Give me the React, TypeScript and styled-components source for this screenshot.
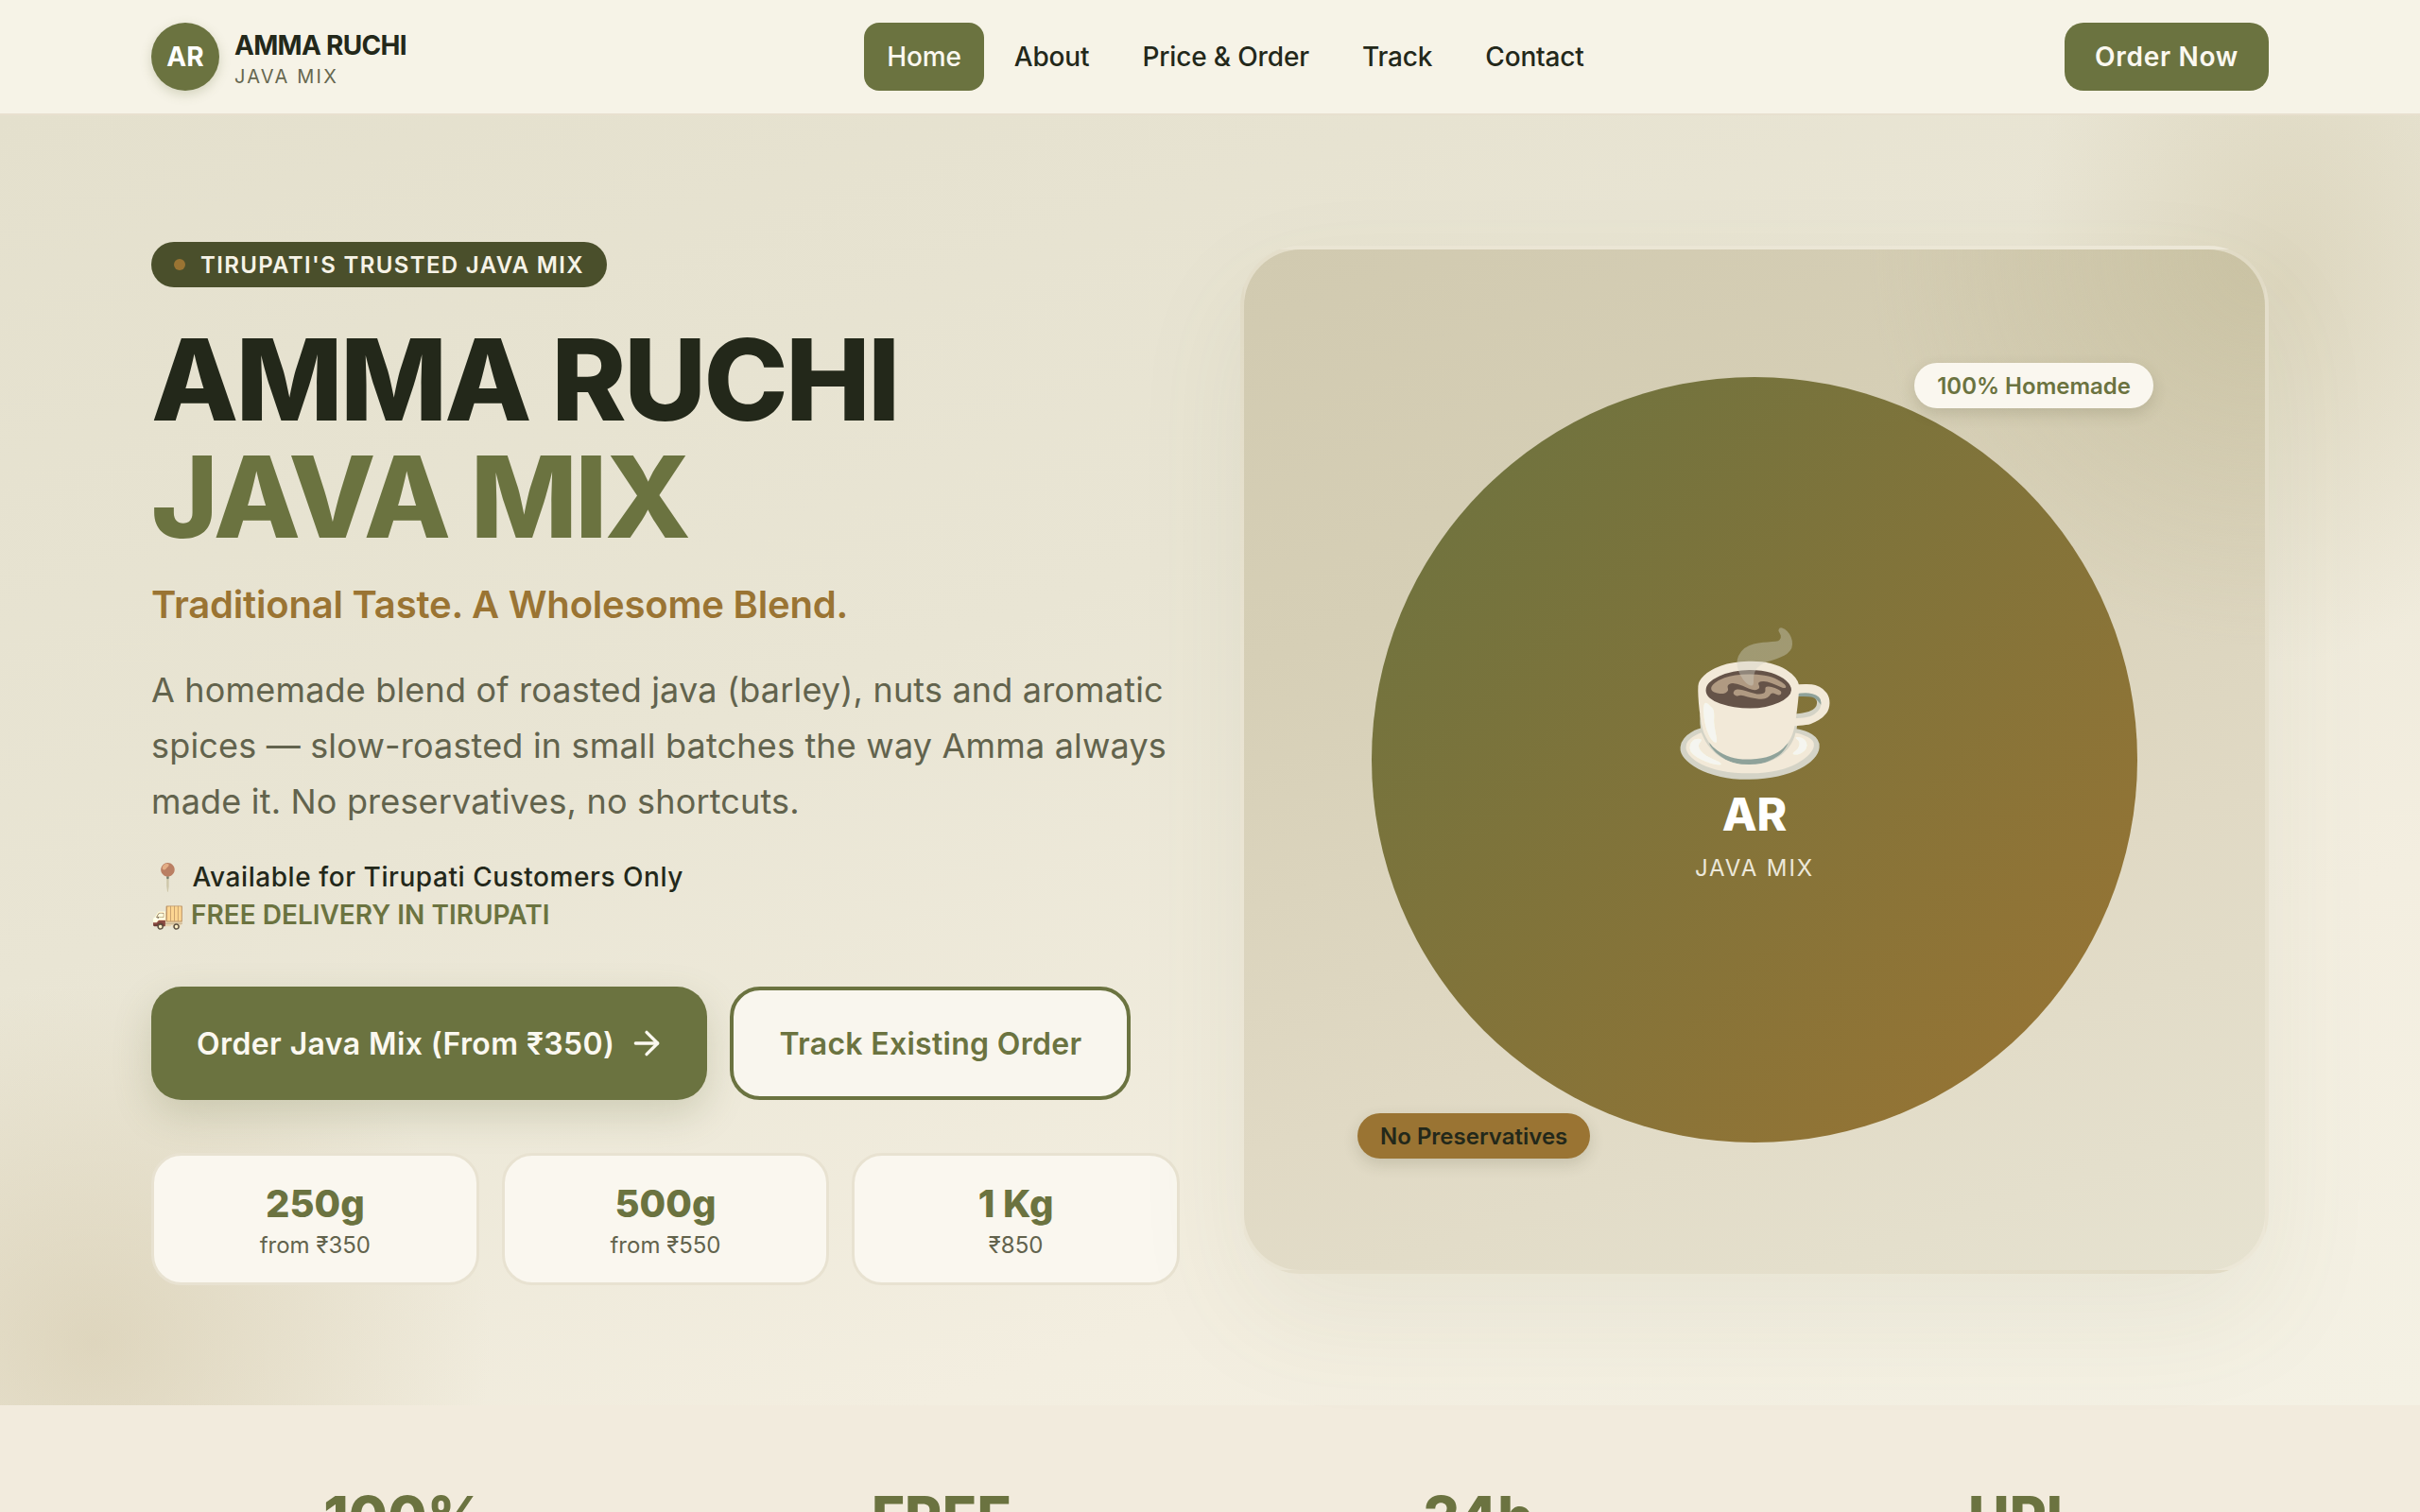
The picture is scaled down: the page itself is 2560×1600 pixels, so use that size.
import { FC } from "react";
import styled, { createGlobalStyle } from "styled-components";
import { ArrowRight } from "lucide-react";

const olive = "#6b7340";
const ink = "#23281a";
const bronze = "#9a7433";

const GlobalStyle = createGlobalStyle`
  * { box-sizing: border-box; }
  html, body { margin: 0; padding: 0; }
  body {
    font-family: Inter, "Noto Sans", sans-serif;
    background: #f6f3e7;
    color: ${ink};
  }
`;

const Page = styled.div`
  height: 100vh;
  overflow: hidden;
`;

const Header = styled.header`
  height: 122px;
  padding: 0 160px;
  display: flex;
  justify-content: space-between;
  align-items: center;
  background: #f6f3e7;
  border-bottom: 2px solid #e8e0cf;
`;

const Brand = styled.div`
  display: flex;
  align-items: center;
  gap: 16px;
`;

const BrandMark = styled.div`
  width: 72px;
  height: 72px;
  border-radius: 50%;
  background: ${olive};
  color: #fff;
  font-size: 28px;
  font-weight: 700;
  display: flex;
  align-items: center;
  justify-content: center;
  box-shadow: 0 4px 12px rgba(107, 115, 64, 0.25);
`;

const BrandText = styled.div`
  padding-top: 5px;
  display: flex;
  flex-direction: column;
`;

const BrandName = styled.span`
  font-size: 28px;
  line-height: 36px;
  font-weight: 700;
  letter-spacing: -0.7px;
  color: ${ink};
`;

const BrandSub = styled.span`
  font-size: 20px;
  line-height: 30px;
  letter-spacing: 2.2px;
  color: #66674f;
`;

const Nav = styled.nav`
  display: flex;
  gap: 8px;
`;

const NavLink = styled.a<{ $active?: boolean }>`
  height: 72px;
  padding: 0 24px;
  display: flex;
  align-items: center;
  border-radius: 16px;
  font-size: 28px;
  font-weight: 500;
  letter-spacing: -0.15px;
  background: ${(p) => (p.$active ? olive : "transparent")};
  color: ${(p) => (p.$active ? "#fbf8f0" : ink)};
`;

const HeaderAction = styled.button`
  height: 72px;
  width: 216px;
  border: none;
  border-radius: 20px;
  background: ${olive};
  color: #fbf8f0;
  font-family: inherit;
  font-size: 28px;
  font-weight: 600;
  letter-spacing: 0.7px;
`;

const Hero = styled.section`
  height: 1365px;
  padding: 134px 160px 0;
  display: grid;
  grid-template-columns: 1fr 1fr;
  column-gap: 64px;
  align-items: start;
  background:
    radial-gradient(ellipse 280px 400px at 2420px 180px, rgba(200, 190, 155, 0.4), transparent),
    radial-gradient(ellipse 420px 380px at 100px 1300px, rgba(200, 186, 150, 0.42), transparent),
    linear-gradient(160deg, #e4e0cd 0%, #e9e5d4 40%, #f3eee0 75%, #f4f1e4 100%);
`;

const Copy = styled.div`
  display: flex;
  flex-direction: column;
  align-items: flex-start;
`;

const Badge = styled.div`
  height: 48px;
  padding: 0 24px;
  display: flex;
  align-items: center;
  gap: 16px;
  border-radius: 24px;
  background: #4a4f2b;
  color: #f6f3e7;
  font-size: 24px;
  font-weight: 600;
  letter-spacing: 1.35px;
`;

const BadgeDot = styled.span`
  width: 12px;
  height: 12px;
  border-radius: 50%;
  background: ${bronze};
`;

const Title = styled.h1`
  margin: 36px 0 0;
  font-size: 120px;
  line-height: 124px;
  font-weight: 800;
  letter-spacing: -2.8px;
  color: ${ink};
`;

const TitleAccent = styled.span`
  display: block;
  color: ${olive};
`;

const Tagline = styled.p`
  margin: 24px 0 0;
  font-size: 40px;
  line-height: 56px;
  font-weight: 600;
  letter-spacing: -0.2px;
  color: ${bronze};
`;

const Lead = styled.p`
  margin: 33px 0 0;
  font-size: 36px;
  line-height: 59px;
  letter-spacing: 0.18px;
  color: #62634d;
`;

const Notes = styled.div`
  margin-top: 30px;
  display: flex;
  flex-direction: column;
`;

const NoteLine = styled.div<{ $accent?: boolean }>`
  font-size: 28px;
  line-height: 40px;
  font-weight: ${(p) => (p.$accent ? 600 : 500)};
  letter-spacing: ${(p) => (p.$accent ? "0" : "0.56px")};
  color: ${(p) => (p.$accent ? olive : ink)};
`;

// the reference's emoji sit in the page's muted palette
const Emoji = styled.span`
  filter: sepia(0.75) brightness(1.04);
`;

const Actions = styled.div`
  margin-top: 56px;
  display: flex;
  gap: 24px;
`;

const PrimaryButton = styled.button`
  height: 120px;
  padding: 0 44px 0 48px;
  display: flex;
  align-items: center;
  gap: 14px;
  border: none;
  border-radius: 32px;
  background: ${olive};
  color: #fbf8f0;
  font-family: inherit;
  font-size: 32px;
  font-weight: 600;
  letter-spacing: 0.4px;
  box-shadow: 0 16px 40px rgba(107, 115, 64, 0.22);
`;

const SecondaryButton = styled.button`
  height: 120px;
  padding: 0 48px;
  border: 4px solid ${olive};
  border-radius: 32px;
  background: #f9f6ee;
  color: ${olive};
  font-family: inherit;
  font-size: 32px;
  font-weight: 600;
  letter-spacing: 0.3px;
`;

const Sizes = styled.div`
  width: 100%;
  margin-top: 56px;
  display: grid;
  grid-template-columns: repeat(3, 1fr);
  gap: 24px;
`;

const SizeCard = styled.div`
  height: 140px;
  padding-top: 3px;
  display: flex;
  flex-direction: column;
  align-items: center;
  justify-content: center;
  border: 3px solid #e8e2d1;
  border-radius: 32px;
  background: #faf7ef;
`;

const SizeValue = styled.span`
  font-size: 40px;
  line-height: 52px;
  font-weight: 800;
  color: ${olive};
`;

const SizePrice = styled.span`
  font-size: 24px;
  line-height: 36px;
  color: #62634d;
`;

const Showcase = styled.div`
  position: relative;
  height: 1088px;
  margin-top: 4px;
  display: flex;
  align-items: center;
  justify-content: center;
  border: 4px solid rgba(240, 235, 220, 0.6);
  border-radius: 64px;
  background:
    radial-gradient(ellipse 420px 420px at 100% 0%, rgba(190, 182, 145, 0.5), transparent),
    linear-gradient(160deg, #d1cab0 0%, #d6cfb6 30%, #e0d9c4 65%, #e6e2d0 100%);
  box-shadow: 0 48px 120px rgba(107, 115, 64, 0.08);
`;

const Disc = styled.div`
  width: 75%;
  aspect-ratio: 1;
  padding-bottom: 16px;
  border-radius: 50%;
  display: flex;
  flex-direction: column;
  align-items: center;
  justify-content: center;
  background: linear-gradient(135deg, #6b7340 0%, #9a7433 100%);
`;

const Cup = styled.div`
  margin-bottom: 5px;
  font-size: 144px;
  line-height: 172px;
  filter: sepia(0.4) saturate(0.75) brightness(0.96);
`;

const DiscTitle = styled.div`
  font-size: 48px;
  line-height: 56px;
  font-weight: 800;
  color: #fff;
`;

const DiscSub = styled.div`
  margin-top: 13px;
  font-size: 24px;
  line-height: 32px;
  letter-spacing: 1.92px;
  color: #ece8da;
`;

const FloatingPill = styled.div<{ $tone: "light" | "bronze" }>`
  position: absolute;
  height: 48px;
  padding: 0 24px;
  display: flex;
  align-items: center;
  border-radius: 24px;
  font-size: 24px;
  font-weight: 600;
  background: ${(p) => (p.$tone === "light" ? "#faf7ef" : bronze)};
  color: ${(p) => (p.$tone === "light" ? olive : ink)};
  box-shadow: 0 6px 16px rgba(60, 60, 30, 0.16);
  ${(p) => (p.$tone === "light" ? "top: 120px; right: 118px;" : "bottom: 118px; left: 120px;")}
`;

const Stats = styled.section`
  padding: 78px 160px 0;
  display: grid;
  grid-template-columns: repeat(4, 1fr);
  gap: 32px;
  background: #f2ebdd;
`;

const StatValue = styled.div`
  text-align: center;
  font-size: 60px;
  line-height: 80px;
  font-weight: 800;
  color: ${olive};
`;

const navItems = ["Home", "About", "Price & Order", "Track", "Contact"];

const sizes = [
  { value: "250g", price: "from ₹350" },
  { value: "500g", price: "from ₹550" },
  { value: "1 Kg", price: "₹850" },
];

const stats = ["100%", "FREE", "24h", "UPI"];

const App: FC = () => {
  return (
    <Page>
      <GlobalStyle />
      <Header>
        <Brand>
          <BrandMark>AR</BrandMark>
          <BrandText>
            <BrandName>AMMA RUCHI</BrandName>
            <BrandSub>JAVA MIX</BrandSub>
          </BrandText>
        </Brand>
        <Nav>
          {navItems.map((item) => (
            <NavLink key={item} $active={item === "Home"}>
              {item}
            </NavLink>
          ))}
        </Nav>
        <HeaderAction>Order Now</HeaderAction>
      </Header>
      <Hero>
        <Copy>
          <Badge>
            <BadgeDot />
            TIRUPATI'S TRUSTED JAVA MIX
          </Badge>
          <Title>
            AMMA RUCHI
            <TitleAccent>JAVA MIX</TitleAccent>
          </Title>
          <Tagline>Traditional Taste. A Wholesome Blend.</Tagline>
          <Lead>
            A homemade blend of roasted java (barley), nuts and aromatic spices — slow-roasted in
            small batches the way Amma always made it. No preservatives, no shortcuts.
          </Lead>
          <Notes>
            <NoteLine>
              <Emoji>📍</Emoji> Available for Tirupati Customers Only
            </NoteLine>
            <NoteLine $accent>
              <Emoji>🚚</Emoji> FREE DELIVERY IN TIRUPATI
            </NoteLine>
          </Notes>
          <Actions>
            <PrimaryButton>
              Order Java Mix (From ₹350)
              <ArrowRight size={40} strokeWidth={2} />
            </PrimaryButton>
            <SecondaryButton>Track Existing Order</SecondaryButton>
          </Actions>
          <Sizes>
            {sizes.map((size) => (
              <SizeCard key={size.value}>
                <SizeValue>{size.value}</SizeValue>
                <SizePrice>{size.price}</SizePrice>
              </SizeCard>
            ))}
          </Sizes>
        </Copy>
        <Showcase>
          <Disc>
            <Cup>☕</Cup>
            <DiscTitle>AR</DiscTitle>
            <DiscSub>JAVA MIX</DiscSub>
          </Disc>
          <FloatingPill $tone="light">100% Homemade</FloatingPill>
          <FloatingPill $tone="bronze">No Preservatives</FloatingPill>
        </Showcase>
      </Hero>
      <Stats>
        {stats.map((stat) => (
          <StatValue key={stat}>{stat}</StatValue>
        ))}
      </Stats>
    </Page>
  );
};

export default App;
